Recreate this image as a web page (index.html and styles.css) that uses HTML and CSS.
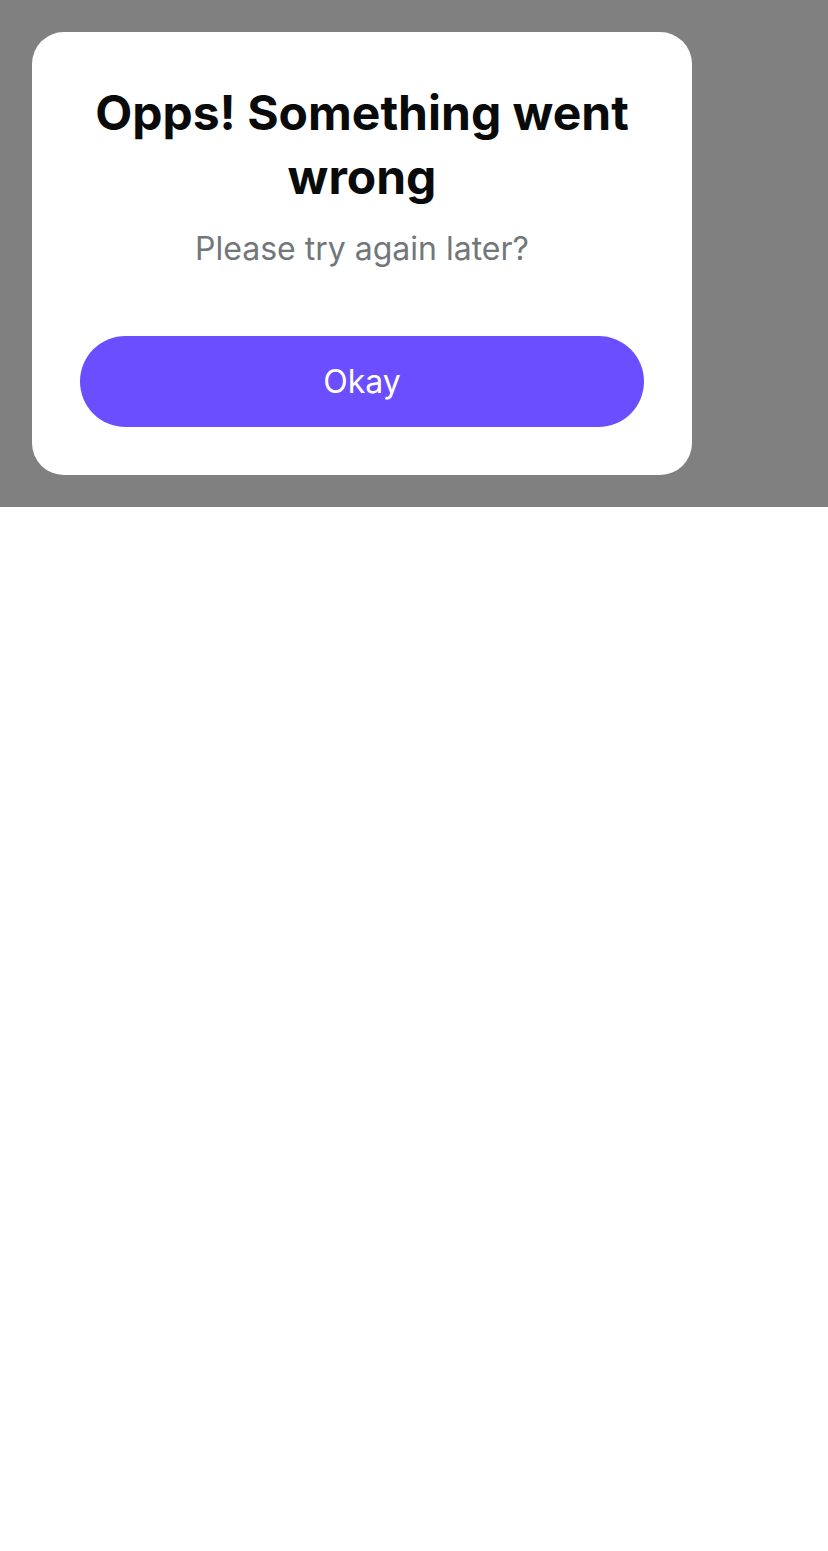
FILE: index.html
```html
<!DOCTYPE html>
<html lang="en">
<head>
<meta charset="utf-8">
<title>Error</title>
<link rel="stylesheet" href="styles.css">
</head>
<body>
<div class="overlay">
  <div class="dialog">
    <h1 class="title">Opps! Something went wrong</h1>
    <p class="subtitle">Please try again later?</p>
    <button class="btn" type="button">Okay</button>
  </div>
</div>
</body>
</html>
```
FILE: styles.css
```css
* { box-sizing: border-box; }
html, body { margin: 0; padding: 0; background: #ffffff; }
body { font-family: Inter, "Noto Sans", sans-serif; }
.overlay {
  background: #808080;
  padding: 32px;
  height: 507px;
}
.dialog {
  width: 660px;
  background: #ffffff;
  border-radius: 32px;
  padding: 48px;
  display: flex;
  flex-direction: column;
  align-items: center;
  text-align: center;
}
.title {
  margin: 1px 0 0;
  font-size: 48px;
  line-height: 64px;
  font-weight: 700;
  color: #090a0a;
}
.subtitle {
  margin: 16px 0 0;
  font-size: 32px;
  line-height: 48px;
  color: #72777a;
}
.btn {
  margin-top: 63px;
  width: 100%;
  height: 91px;
  border: none;
  border-radius: 48px;
  background: #6b4eff;
  color: #ffffff;
  font-family: Inter, "Noto Sans", sans-serif;
  font-size: 32px;
  padding: 0;
}
```
